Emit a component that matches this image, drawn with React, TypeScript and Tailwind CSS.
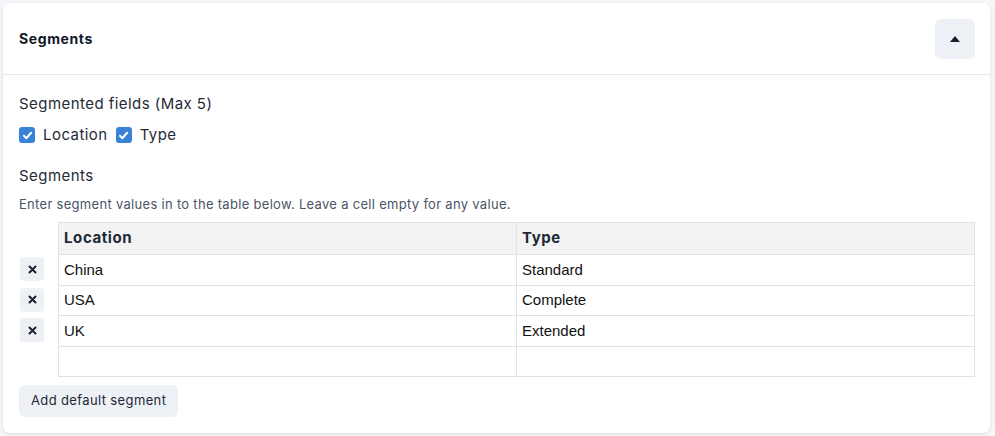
import React from 'react';

const rows = [
  { location: 'China', type: 'Standard' },
  { location: 'USA', type: 'Complete' },
  { location: 'UK', type: 'Extended' },
  { location: '', type: '' },
];

function CheckBox() {
  return (
    <span className="w-4 h-4 rounded-[3px] bg-[#3a82d8] flex items-center justify-center shrink-0">
      <svg width="11" height="11" viewBox="0 0 10 10" fill="none">
        <path d="M1.8 5.3 L4 7.4 L8.3 2.5" stroke="white" strokeWidth="1.9" strokeLinecap="round" strokeLinejoin="round" />
      </svg>
    </span>
  );
}

export default function App() {
  return (
    <div className="w-[995px] h-[436px] bg-[#f4f6f9] p-[3px] font-['Inter',sans-serif] text-[#1a202c]">
      <div className="bg-white rounded-md shadow-[0_1px_3px_rgba(0,0,0,0.12)] h-[430px] w-[987px] flex flex-col">
        {/* Header */}
        <div className="h-[72px] flex items-center justify-between pl-4 pr-[15px] border-b border-[#e2e8f0]">
          <h2 className="text-[14px] font-bold tracking-[0.6px] text-[#111827]">Segments</h2>
          <button className="w-10 h-10 rounded-md bg-[#edf1f5] flex items-center justify-center">
            <svg width="10" height="6" viewBox="0 0 10 6">
              <path d="M5 0 L10 6 L0 6 Z" fill="#1a202c" />
            </svg>
          </button>
        </div>

        {/* Body */}
        <div className="pl-4 pr-[15px] pt-[19px] flex flex-col">
          <div className="text-[15px] leading-[20px] tracking-[0.45px] text-[#1f2937]">Segmented fields (Max 5)</div>
          <div className="flex items-center gap-2 mt-[11px] text-[15px] leading-[20px] tracking-[0.45px] text-[#1f2937]">
            <label className="flex items-center gap-2">
              <CheckBox />
              <span>Location</span>
            </label>
            <label className="flex items-center gap-2">
              <CheckBox />
              <span>Type</span>
            </label>
          </div>

          <div className="mt-[21px] text-[15px] leading-[20px] tracking-[0.45px] text-[#1f2937]">Segments</div>
          <p className="mt-[9px] text-[13px] leading-[18px] tracking-[0.3px] text-[#4a5568]">
            Enter segment values in to the table below. Leave a cell empty for any value.
          </p>

          <div className="flex mt-[9px]">
            <div className="w-[39px] flex flex-col pt-[32px] shrink-0">
              {rows.map((r, i) => (
                <div key={i} className="h-[30.5px] flex items-center">
                  {r.location && (
                    <button className="w-6 h-6 ml-px rounded-[4px] bg-[#edf1f5] flex items-center justify-center">
                      <svg width="9" height="9" viewBox="0 0 9 9">
                        <path d="M1.5 1.5 L7.5 7.5 M7.5 1.5 L1.5 7.5" stroke="#1a202c" strokeWidth="2" strokeLinecap="round" />
                      </svg>
                    </button>
                  )}
                </div>
              ))}
            </div>
            <table className="flex-1 border-collapse border border-[#e2e2e2] text-[15px]">
              <thead>
                <tr className="bg-[#f3f3f3] h-[32px]">
                  <th className="border border-[#e2e2e2] text-left font-bold tracking-[0.6px] px-[5px] w-[458px] text-[#1f2937]">Location</th>
                  <th className="border border-[#e2e2e2] text-left font-bold tracking-[0.6px] px-[5px] text-[#1f2937]">Type</th>
                </tr>
              </thead>
              <tbody className="font-['Liberation_Sans',sans-serif] text-[#111]">
                {rows.map((r, i) => (
                  <tr key={i} className="h-[30.5px]">
                    <td className="border border-[#e2e2e2] px-[5px]">{r.location}</td>
                    <td className="border border-[#e2e2e2] px-[5px]">{r.type}</td>
                  </tr>
                ))}
              </tbody>
            </table>
          </div>

          <div className="mt-[8px]">
            <button className="h-8 px-3 rounded-md bg-[#edf1f5] text-[13px] tracking-[0.37px] text-[#1f2937]">Add default segment</button>
          </div>
        </div>
      </div>
    </div>
  );
}
